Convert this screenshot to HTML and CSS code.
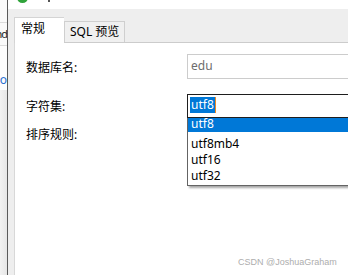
FILE: index.html
```html
<!DOCTYPE html>
<html lang="zh-CN">
<head>
    <meta charset="UTF-8">
    <title>新建数据库</title>
    <link rel="stylesheet" href="styles.css">
</head>
<body>
    <div class="side">
        <div class="side-row"></div>
        <div class="side-row side-text">nd</div>
        <div class="side-row side-link">o</div>
    </div>
    <div class="frame">
        <div class="titlebar">
            <span class="app-icon"></span>
            <span class="title-mark"></span>
        </div>
        <div class="panel">
            <div class="tabs">
                <div class="tab active">常规</div>
                <div class="tab">SQL 预览</div>
            </div>
            <div class="content">
                <div class="form-row">
                    <label class="form-label">数据库名:</label>
                    <div class="text-input">edu</div>
                </div>
                <div class="form-row combo-row">
                    <label class="form-label">字符集:</label>
                    <div class="combo">
                        <span class="combo-sel">utf8</span><span class="caret"></span>
                        <ul class="dropdown">
                            <li class="selected">utf8</li>
                            <li>utf8mb4</li>
                            <li>utf16</li>
                            <li>utf32</li>
                        </ul>
                    </div>
                </div>
                <div class="form-row short-row">
                    <label class="form-label">排序规则:</label>
                </div>
            </div>
        </div>
    </div>
    <div class="watermark">CSDN @JoshuaGraham</div>
</body>
</html>
```

FILE: styles.css
```css
html, body {
    margin: 0;
    padding: 0;
    height: 100%;
    overflow: hidden;
}
body {
    font-family: "Noto Sans", "Noto Sans CJK SC", sans-serif;
    font-size: 12px;
    color: #000;
    background: #fff;
    display: flex;
}
.side {
    width: 7px;
    flex: none;
    background: linear-gradient(to right, #f2f2f2, #e6e6e6);
    border-right: 1px solid #5a5a5a;
    overflow: hidden;
    white-space: nowrap;
}
.side-row {
    height: 22px;
    background: #fafafa;
    border-bottom: 1px solid #dcdcdc;
    line-height: 22px;
    direction: rtl;
}
.side-text {
    color: #222;
    font-size: 11px;
    letter-spacing: -1px;
}
.side-link {
    color: #2a6fd0;
    background: #fdfdfd;
    border-bottom: none;
    height: 44px;
    line-height: 20px;
    padding-top: 24px;
    box-sizing: border-box;
}
.frame {
    flex: 1;
    display: flex;
    flex-direction: column;
    min-width: 0;
}
.titlebar {
    height: 9px;
    flex: none;
    background: #fff;
    position: relative;
}
.app-icon {
    position: absolute;
    left: 9px;
    top: -8px;
    width: 11px;
    height: 11px;
    border-radius: 50%;
    background: #2fa33a;
}
.title-mark {
    position: absolute;
    left: 40px;
    top: 0;
    width: 2px;
    height: 2px;
    background: #555;
}
.panel {
    flex: 1;
    display: flex;
    flex-direction: column;
    background: #eeeeee;
    padding-left: 6px;
}
.tabs {
    height: 33px;
    flex: none;
    display: flex;
    align-items: flex-end;
    border-bottom: 1px solid #cccccc;
}
.tab {
    height: 21px;
    line-height: 20px;
    padding: 0 5px;
    box-sizing: border-box;
    background: #f0f0f0;
    border: 1px solid #cfcfcf;
    border-bottom: none;
}
.tab.active {
    height: 26px;
    width: 50px;
    line-height: 22px;
    padding: 0 6px;
    background: #fff;
    border-color: #d4d4d4;
    border-right: none;
    margin-bottom: -1px;
}
.content {
    flex: 1;
    background: #fff;
    border-left: 1px solid #d8d8d8;
    padding: 11px 0 0 11px;
}
.form-row {
    display: flex;
    align-items: center;
    height: 25px;
}
.combo-row {
    margin-top: 15px;
    height: 24px;
}
.short-row {
    margin-top: 3px;
}
.form-label {
    width: 161px;
    flex: none;
}
.text-input {
    width: 200px;
    height: 25px;
    box-sizing: border-box;
    border: 1px solid #cccccc;
    padding-left: 3px;
    line-height: 22px;
    color: #6d6d6d;
    flex: none;
}
.combo {
    position: relative;
    width: 200px;
    height: 24px;
    box-sizing: border-box;
    border: 1px solid #1e1e1e;
    padding: 2px 0 0 2px;
    flex: none;
}
.combo-sel {
    display: inline-block;
    height: 16px;
    line-height: 16px;
    padding: 0 1px;
    background: #0078d7;
    color: #fff;
    vertical-align: top;
}
.caret {
    display: inline-block;
    width: 1px;
    height: 16px;
    background: #f08a24;
    vertical-align: top;
}
.dropdown {
    position: absolute;
    left: -1px;
    top: 23px;
    width: 200px;
    margin: 0;
    padding: 0 0 2px 0;
    list-style: none;
    background: #fff;
    border: 1px solid #646464;
    border-top: none;
    box-shadow: 2px 2px 2px rgba(0, 0, 0, 0.35);
    z-index: 2;
}
.dropdown li {
    height: 16px;
    line-height: 17px;
    padding-left: 3px;
}
.dropdown li.selected {
    background: #0078d7;
    color: #fff;
    height: 14px;
    line-height: 12px;
    margin-bottom: 3px;
}
.watermark {
    position: absolute;
    left: 238px;
    top: 257px;
    font-family: "Liberation Sans", sans-serif;
    font-size: 9px;
    color: #adadad;
}
```
